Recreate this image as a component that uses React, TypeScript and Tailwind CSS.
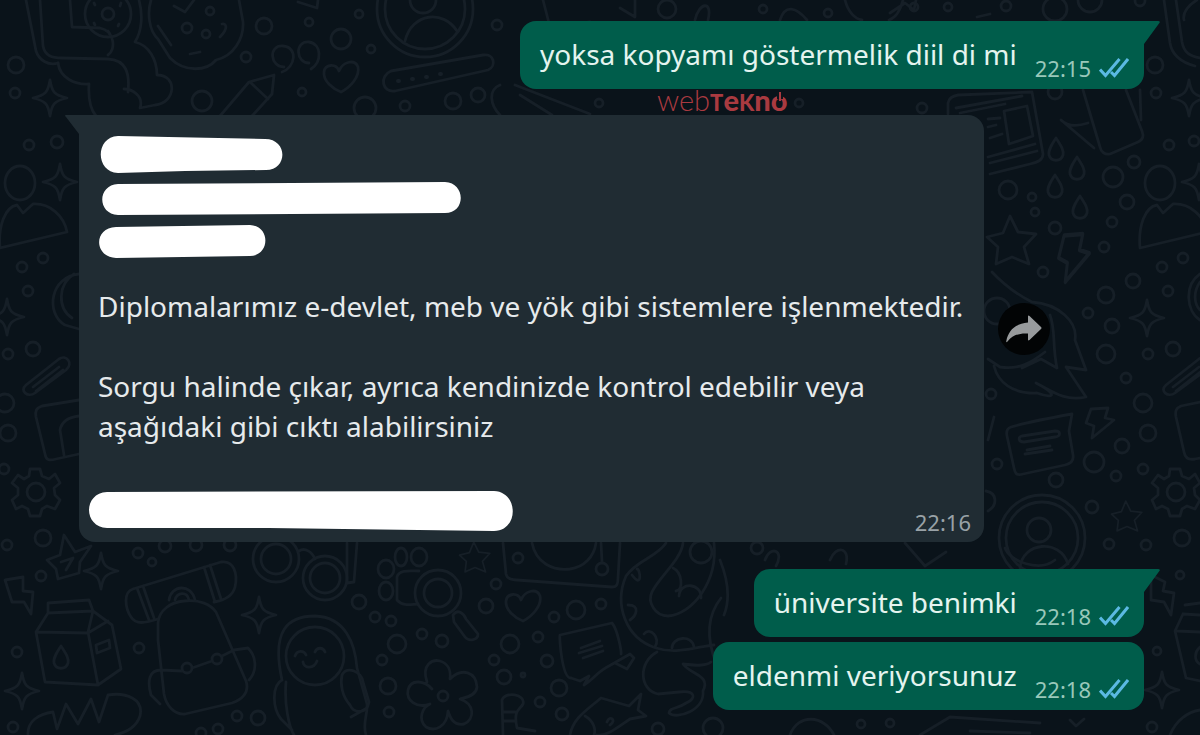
import React from "react";

interface ISentMessage {
  text: string;
  time: string;
}

const dots: number[][] = [
  [16, 65, 8], [15, 93, 5], [264, 26, 8], [309, 22, 4], [341, 39, 10], [359, 14, 4], [371, 49, 4],
  [246, 57, 5], [202, 101, 10], [302, 92, 4], [365, 108, 11], [405, 106, 5], [453, 101, 8], [478, 95, 7],
  [497, 25, 5], [29, 145, 5], [57, 142, 6], [22, 267, 5], [43, 258, 5], [948, 7, 4], [1006, 6, 5],
  [1055, 9, 12], [1090, 0, 12], [1140, 1, 5], [1155, 65, 8], [1156, 93, 5], [1055, 92, 7], [922, 108, 5],
  [1169, 145, 5], [1194, 141, 5], [1134, 162, 6], [1113, 177, 10], [1127, 202, 7], [1008, 190, 9],
  [1032, 197, 4], [1035, 212, 4], [1055, 228, 6], [1112, 222, 5], [1104, 247, 5], [1043, 272, 5],
  [1162, 267, 5], [1183, 258, 5], [1133, 281, 7], [1106, 295, 8], [1168, 291, 5], [1088, 313, 5],
  [1112, 326, 7], [1106, 354, 9], [1148, 354, 5], [1173, 349, 7], [1126, 378, 5], [1143, 403, 9],
  [991, 394, 5], [1148, 433, 8], [1122, 446, 7], [1094, 462, 10], [1116, 476, 5], [1143, 469, 5],
  [997, 464, 5], [1056, 480, 7], [1092, 507, 6], [1109, 544, 5], [1146, 545, 5], [1182, 538, 8],
  [28, 291, 5], [8, 354, 5], [33, 349, 7], [5, 403, 9], [8, 433, 8], [4, 469, 5], [43, 538, 8],
  [7, 545, 5], [41, 576, 5], [138, 553, 5], [152, 562, 4], [165, 546, 6], [196, 545, 6], [230, 545, 6],
  [17, 652, 5], [139, 648, 5], [13, 727, 5], [237, 716, 5], [258, 718, 7], [218, 729, 5], [201, 733, 5],
  [359, 602, 7], [375, 617, 5], [391, 621, 5], [397, 644, 9], [382, 660, 5], [388, 686, 8], [389, 712, 5],
  [422, 634, 5], [442, 641, 6], [486, 606, 7], [496, 584, 5], [518, 558, 5], [576, 610, 9], [554, 617, 5],
  [601, 604, 5], [510, 644, 9], [538, 637, 5], [494, 660, 5], [547, 661, 6], [504, 677, 7], [523, 675, 2],
  [559, 688, 8], [540, 702, 5], [562, 714, 6], [658, 729, 6], [1180, 575, 4], [1157, 651, 4],
  [861, 724, 4], [890, 723, 4], [1152, 727, 5], [713, 728, 10], [667, 9, 9], [763, 9, 4], [828, 13, 4],
  [914, 7, 4], [599, 103, 4], [799, 103, 4], [757, 548, 6],
];

const sparkles: number[][] = [
  [50, 98], [1189, 98], [7, 317], [1147, 318], [101, 571], [259, 615], [22, 691], [1162, 690], [60, 182], [1199, 182],
];

const Wallpaper: React.FC = () => {
  return (
    <svg
      className="pointer-events-none absolute inset-0 h-full w-full"
      viewBox="0 0 1200 735"
      preserveAspectRatio="xMidYMid slice"
      fill="none"
      stroke="#161f27"
      strokeWidth="2.8"
      strokeLinecap="round"
      strokeLinejoin="round"
      aria-hidden="true"
    >
      <defs>
        <path id="sparkle" d="M0-18C2-6 4-3 17 0C4 3 2 6 0 18C-2 6-4 3-17 0C-4-3-2-6 0-18Z" />
        <path id="heart" d="M0 15C-8 12-18 4-17-5C-16-13-5-14-2-6C2-16 14-18 17-10C19-1 10 10 0 15Z" />
        <path id="star" d="M-2-24L6-8L24-6L12 7L17 24L0 17L-16 24L-14 7L-25-3L-9-7Z" />
        <path id="bolt" d="M-9-14L8-15L5-5L14-3L-8 15L-6 3L-14 0Z" />
        <path id="drop" d="M0-12C5-4 8 0 7 5C5 12-5 12-7 5C-8 0-4-6 0-12Z" />
        <g id="person">
          <ellipse cx="0" cy="-8" rx="15" ry="17" />
          <path d="M-20 57C-22 35-15 16-3 14L3 22L13 13C30 12 44 25 47 41Z" />
        </g>
        <g id="gear">
          <circle r="9" />
          <path d="M-6-23L4-23L6-16L13-13L19-18L24-9L18-4L19 3L24 8L19 17L11 14L6 17L4 24L-6 24L-8 17L-14 14L-20 17L-24 8L-18 3L-18-4L-24-9L-18-17L-12-13L-7-16Z" />
        </g>
        <path id="clip" d="M-20 11L13-15C20-20 28-11 20-4L-11 19C-18 24-27 17-20 11ZM-13 13L13-7M-10 17L17-4" />
      </defs>

      {dots.map(([x, y, r], index) => (
        <circle key={index} cx={x} cy={y} r={r} />
      ))}
      {sparkles.map(([x, y], index) => (
        <use key={index} href="#sparkle" x={x} y={y} />
      ))}
      <use href="#heart" x="341" y="77" />
      <use href="#heart" x="523" y="606" />
      <use href="#star" x="1012" y="240" />
      <use href="#star" transform="translate(1127 516) scale(.62)" />
      <use href="#star" transform="translate(475 557) scale(.62)" />
      <use href="#bolt" x="1100" y="423" />
      <use href="#bolt" transform="translate(1074 258) scale(1.1 1.6)" />
      <use href="#person" x="20" y="191" />
      <use href="#person" x="1160" y="191" />
      <use href="#gear" x="36" y="492" />
      <use href="#gear" x="1176" y="492" />
      <use href="#clip" x="46" y="374" />
      <use href="#clip" x="1186" y="374" />
      <use href="#drop" x="1056" y="150" />
      <use href="#drop" x="1077" y="169" />
      <use href="#drop" x="1055" y="187" />
      <use href="#drop" x="1080" y="208" />

      {/* profile badges */}
      <circle cx="425" cy="9" r="48" />
      <circle cx="425" cy="9" r="40" />
      <circle cx="423" cy="0" r="13" />
      <path d="M405 41C412 12 444 10 457 31" />
      <circle cx="1042" cy="538" r="43" />
      <circle cx="1042" cy="538" r="36" />
      <circle cx="1039" cy="530" r="12" />
      <path d="M1020 568C1022 542 1060 538 1068 564" />

      {/* phone in a hand and cookie */}
      <path d="M26 0L36 51C39 60 48 66 58 63M40 0L43 46C45 56 52 58 62 58L108 59C126 60 130 73 128 92" />
      <path d="M70 0L72 27L100 28C115 31 116 50 108 55M58 63C60 78 75 85 89 84C88 100 91 110 96 116" />
      <path d="M139 0C143 15 142 31 135 42C149 45 157 60 157 75C178 75 176 103 155 105L140 108C144 96 132 89 124 89" />
      <circle cx="108" cy="14" r="23" />
      <circle cx="108" cy="14" r="6" />
      <path d="M94 3L95 5M121 3L120 6M94 23L95 25M118 26L119 24M108 31L110 34" />
      <path d="M151 0C147 13 149 31 158 39L170 58C185 73 207 71 216 60C234 56 244 38 243 22L239 0M158 26L171 45M174 6L185 12L194 0M220 37C229 28 226 23 222 24M190 54L200 52" />
      <circle cx="187" cy="28" r="5" />
      <circle cx="210" cy="11" r="4" />
      <circle cx="206" cy="34" r="4" />

      {/* quotes, pencil and password field */}
      <path d="M284 67C270 67 268 45 283 46C298 47 296 67 282 72M309 63C296 63 294 41 309 42C322 44 322 62 311 69" />
      <path d="M220 116L249 82L274 75L272 94L252 116M251 83L268 99" />
      <path d="M391 71L483 55C494 53 497 66 488 70L395 91C382 93 379 76 391 71Z" />
      <path d="M398 81h1M412 79h1M426 77h1M440 74h1" strokeWidth="4" />
      <path d="M298 2L317 8L318 0M543 0L550 27L590 22M635 0L635 17L620 8M695 20C699 2 713 0 708 20M780 20C785 4 796 7 807 20" />
      <path d="M500 85C488 90 490 105 500 115M515 85L590 114M520 95L552 115M845 0C848 12 855 19 862 20M903 0C900 12 895 18 889 20M890 13L905 3L914 10L916 0M977 17L990 14" />

      {/* newspaper and tablet */}
      <path d="M948 114L948 103C949 98 952 96 958 95L1032 92L1043 154C1043 160 1038 162 1030 164L990 174M956 108L1022 96M960 113L1005 104M1004 111L1027 106L1033 136L1009 144ZM988 119L1000 118M988 127L996 125M990 138L1002 134M988 157L1035 144M990 163L1037 151" />
      <path d="M1083 90L1100 147C1101 152 1105 155 1110 154L1138 142C1143 140 1144 136 1142 131L1126 90M1061 120L1094 148M1061 120C1068 127 1079 126 1088 123M1140 90L1141 120" />
      <path d="M1164 0L1170 43C1172 55 1180 62 1195 66M1176 0L1182 42C1184 53 1190 56 1200 58M1197 0C1190 4 1182 12 1184 20" />

      {/* rocket and comic bubble beside the long message */}
      <path d="M992 272C1006 287 1018 295 1032 302C1059 304 1078 322 1075 340L1086 370L1066 367L1086 397C1064 402 1050 390 1036 383C1055 393 1058 400 1037 393C1012 394 998 382 994 366M1050 315C1056 331 1052 345 1057 368L1041 359L1022 368M988 359L1000 367C1018 370 1031 363 1045 352" />
      <circle cx="997" cy="311" r="13" />
      <path d="M1011 427C1028 422 1055 417 1072 414L1069 431L1073 455C1074 461 1070 464 1065 465L1023 474C1016 476 1015 473 1014 468L1007 436C1006 431 1008 428 1011 427ZM1022 436L1055 431C1061 431 1061 436 1055 437L1024 442C1018 442 1018 437 1022 436ZM1027 450L1050 446M1025 454L1052 450" />
      <path d="M988 440L994 417M988 511C998 505 997 493 986 491" />

      {/* picture frame on both edges */}
      <path d="M79 400L42 406C36 408 35 411 36 417L45 454C46 460 49 461 56 459L79 454M60 430L64 455M60 430C62 420 70 417 79 416" />
      <path d="M1200 402L1181 406C1176 408 1175 411 1176 417L1184 452C1185 458 1189 460 1195 459L1200 458" />
      <path d="M79 274C50 277 45 313 65 325L79 329M74 274C58 284 57 308 72 318" />
      <path d="M1200 274C1184 285 1186 311 1200 320M1200 282C1193 292 1194 304 1200 310" />

      {/* bolt, milk carton and scribble */}
      <path d="M5 580L23 577L23 591L33 592L31 614L24 602L12 602Z" />
      <path d="M1151 575L1165 582L1163 591L1174 593L1171 615L1164 602L1151 600Z" />
      <path d="M48 603L89 600L93 611L48 613ZM48 613L36 632L45 682L98 685L121 669L112 625L93 611L88 632L98 685M36 632L88 633L108 621M96 645L109 640L110 648L97 653Z" />
      <use href="#drop" x="61" y="658" />
      <path d="M1185 605L1200 603M1183 614L1200 615M1183 614L1175 631L1186 678L1200 681M1177 631L1200 632M1200 647C1194 652 1194 661 1200 664" />
      <path d="M28 735C27 721 39 714 53 712L57 729L66 704L78 724L91 699L99 722L108 695C126 692 144 699 140 716C136 728 124 733 115 735" />
      <path d="M47 560L60 555L64 535L75 552L91 546L80 562L79 573L58 579L56 569ZM61 562L73 558L66 570" />

      {/* backpack */}
      <path d="M133 589L221 562C234 560 238 574 235 587C233 595 226 600 214 602M133 589C123 592 125 608 131 617C136 625 145 623 158 619M137 588L149 620M143 586L154 618M204 567L215 602M210 565L221 599" />
      <path d="M158 623C159 610 171 602 184 601C200 599 211 605 216 612L246 681C250 693 241 700 232 703L185 714C174 715 166 705 164 694L158 640ZM161 670L182 671M192 668L212 661M222 656L234 650L248 648C256 656 258 670 249 680M161 670C149 670 147 681 151 695L160 704" />
      <path d="M169 600C171 585 191 583 195 600M175 600C177 592 187 591 189 600" />
      <circle cx="187" cy="668" r="5" />
      <circle cx="217" cy="659" r="5" />

      {/* glasses and penguin */}
      <circle cx="276" cy="559" r="23" />
      <circle cx="276" cy="559" r="15" />
      <circle cx="325" cy="578" r="22" />
      <circle cx="325" cy="578" r="15" />
      <path d="M299 551C305 547 312 552 315 559M347 543L347 583L354 582L357 543" />
      <circle cx="315" cy="656" r="29" />
      <path d="M282 680C271 630 288 616 315 616C345 617 355 643 357 668L367 704C368 714 362 724 366 735M282 680C272 685 272 708 281 719L292 730M286 682C284 704 289 727 294 735M295 656C297 650 304 650 306 655M315 652C317 647 323 647 325 652M303 662C304 669 314 669 317 661" />
      <path d="M342 675C347 665 362 672 363 682L369 702C367 714 354 714 350 705C342 696 340 684 342 675ZM351 717L367 708" />

      {/* paw, magnifier and flower */}
      <ellipse cx="386" cy="569" rx="8" ry="9" />
      <ellipse cx="401" cy="557" rx="6" ry="9" />
      <ellipse cx="419" cy="557" rx="8" ry="9" />
      <ellipse cx="386" cy="591" rx="7" ry="9" />
      <path d="M397 577C399 569 411 571 419 571M397 577L397 600C403 607 412 604 418 604" />
      <circle cx="438" cy="593" r="23" />
      <circle cx="438" cy="593" r="14" />
      <path d="M453 615C458 608 464 614 466 619L478 634C478 640 469 642 465 637L454 622Z" />
      <circle cx="443" cy="696" r="5" />
      <path d="M427 682C421 664 433 659 440 661C449 664 451 670 450 679C462 667 476 672 477 687C476 697 463 698 460 699C475 704 475 719 464 724C453 726 450 717 448 711C447 727 435 732 426 727C417 719 423 707 430 704C416 709 406 700 408 690C411 678 425 681 432 689" />

      {/* record player, letter, snake and fish */}
      <path d="M503 543L506 574C507 579 511 580 517 580L612 587C617 587 618 584 618 578L620 543M601 543L602 562" />
      <path d="M532 543C536 563 553 571 570 569C584 567 594 557 596 543" />
      <circle cx="602" cy="569" r="6" />
      <path d="M571 678C562 679 559 637 560 635L612 623C618 630 622 654 621 654M571 678L580 681L589 676L584 685C594 679 598 671 609 666L630 654L634 658L627 669L615 663M581 648L600 641M579 653L602 646M583 658L603 651" />
      <path d="M666 543C657 557 637 560 626 576C614 604 625 638 656 648C677 655 700 646 714 645M683 543C681 560 659 577 652 592C647 602 655 616 668 616C693 614 718 581 714 543M721 598C706 617 707 640 716 663M657 652C638 662 639 690 658 694L679 692C697 690 695 699 688 702C676 710 670 707 669 713C677 720 705 710 703 691C711 675 691 675 683 664C692 665 705 667 711 662" />
      <path d="M632 575C643 590 640 568 637 569M628 605C641 605 636 616 630 620M644 634C650 626 661 638 655 647M672 648C672 637 692 634 694 647M673 568C682 572 684 590 676 591M679 596C680 581 702 583 701 598" />
      <circle cx="701" cy="552" r="11" />
      <path d="M503 735L502 700C505 691 526 694 523 704C520 710 513 709 517 728L535 731M504 712L515 712M504 721L515 721" />
      <path d="M570 735C573 718 587 710 601 698L629 706L641 694L638 710L646 716L630 719C618 727 606 737 597 735M585 716C594 721 596 730 594 735M607 722C610 714 617 721 610 725" />
      <path d="M790 735C798 713 824 715 834 735M920 735L950 717L1040 723M970 731L1030 733M1170 735C1176 720 1188 712 1200 710M1070 720L1076 726L1084 719M720 560C728 580 730 600 724 615" />
      <path d="M765 560C770 545 785 550 776 566M830 560C836 545 850 547 846 564M905 543L925 566L946 552M1005 548C1010 562 1040 572 1055 560" />
    </svg>
  );
};

const Ticks: React.FC = () => {
  return (
    <svg
      className="h-5 w-[30px] shrink-0"
      viewBox="0 0 30 20"
      fill="none"
      stroke="#5bb9e3"
      strokeWidth="3"
      role="img"
      aria-label="Okundu"
    >
      <path d="M1 11.5L6.5 17.500L20.5 1" />
      <path d="M12 14L15.5 17.500L29 1" />
    </svg>
  );
};

const SentMessage: React.FC<{ message: ISentMessage; tail?: boolean }> = ({ message, tail }) => {
  return (
    <div
      className={
        tail
          ? "relative flex items-end self-end rounded-2xl rounded-tr-none bg-[#005d4b] pl-5 pr-[15px]"
          : "relative flex items-end self-end rounded-2xl bg-[#005d4b] pl-5 pr-[15px]"
      }
    >
      {tail && (
        <svg className="absolute -right-4 top-0 h-6 w-[17px]" viewBox="0 0 17 24" fill="#005d4b" aria-hidden="true">
          <path d="M0 0H15Q18 0 16 2.500L1 23L0 24Z" />
        </svg>
      )}
      <p className="pb-[15px] pt-[13px] text-[28px] leading-[40px] text-[#e4f4ef]">{message.text}</p>
      <div className="flex items-center gap-2 pb-[9px] pl-[18px]">
        <time className="text-[22px] leading-6 text-[#99c8ba]">{message.time}</time>
        <Ticks />
      </div>
    </div>
  );
};

const Watermark: React.FC = () => {
  return (
    <div className="ml-[578px] flex h-[26px] items-baseline font-['Lato',sans-serif] text-[29px] leading-[22px] text-[#a93a40]">
      <span>
        <span className="font-light">web</span>
        <span className="text-[22px] font-black">T</span>
        <span className="font-black">e</span>
        <span className="text-[22px] font-black">K</span>
        <span className="font-black">n</span>
      </span>
      <span className="relative font-black">
        o
        <svg className="absolute left-[6px] top-[3px] h-3 w-1.5" viewBox="0 0 6 12" aria-hidden="true">
          <path d="M0 0H6V7H0Z" fill="#0b141b" />
          <path d="M2 0H4V9H2Z" fill="#a93a40" />
        </svg>
      </span>
    </div>
  );
};

const ReceivedMessage: React.FC = () => {
  return (
    <div className="relative w-full max-w-[905px] rounded-2xl rounded-tl-none bg-[#202c33] pb-2 pt-[21px] text-[#e6eaec]">
      <svg className="absolute -left-[14px] top-0 h-5 w-[15px]" viewBox="0 0 15 20" fill="#202c33" aria-hidden="true">
        <path d="M15 0H1Q-1 0 1 2L14 19L15 20Z" />
      </svg>
      <div className="flex flex-col pl-5">
        <svg className="ml-px h-[37px] w-[183px]" viewBox="0 0 183 37" fill="#fff" aria-hidden="true">
          <path d="M18 0L165 3C188 3 188 34 166 34L85 35L18 37C-5 36-5 1 18 0Z" />
        </svg>
        <svg className="ml-[3px] mt-[9px] h-[33px] w-[359px]" viewBox="0 0 359 33" fill="#fff" aria-hidden="true">
          <path d="M16 2L343 0C364 1 364 31 343 31L16 33C-5 32-5 3 16 2Z" />
        </svg>
        <svg className="mt-[10px] h-[33px] w-[167px]" viewBox="0 0 167 33" fill="#fff" aria-hidden="true">
          <path d="M17 2L151 0C172 1 171 31 151 31L17 33C-5 32-6 3 17 2Z" />
        </svg>
      </div>
      <div className="mt-7 flex flex-col gap-10 pl-[19px] pr-4 text-[28px] leading-[40px]">
        <p>Diplomalarımız e-devlet, meb ve yök gibi sistemlere işlenmektedir.</p>
        <p>Sorgu halinde çıkar, ayrıca kendinizde kontrol edebilir veya aşağıdaki gibi cıktı alabilirsiniz</p>
      </div>
      <div className="mt-[45px] flex items-end justify-between pl-[10px] pr-[13px]">
        <svg className="mb-[3px] h-10 w-[424px]" viewBox="0 0 424 40" fill="#fff" aria-hidden="true">
          <path d="M18 1L405 0C430 1 430 40 405 40L180 37L18 37C-6 36-6 2 18 1Z" />
        </svg>
        <time className="text-[22px] leading-6 text-[#99a2a7]">22:16</time>
      </div>
    </div>
  );
};

const App: React.FC = () => {
  return (
    <main className="relative min-h-screen overflow-hidden bg-[#0a131a] font-['Noto_Sans',sans-serif]">
      <Wallpaper />
      <div className="relative flex flex-col pb-6 pl-[79px] pr-14 pt-[21px]">
        <SentMessage message={{ text: "yoksa kopyamı göstermelik diil di mi", time: "22:15" }} tail />
        <Watermark />
        <div className="flex items-center gap-[14px]">
          <ReceivedMessage />
          <button
            type="button"
            aria-label="İlet"
            className="flex size-[52px] shrink-0 items-center justify-center rounded-full bg-[#020405]"
          >
            <svg className="h-7 w-9" viewBox="0 0 36 28" fill="#989b9d" aria-hidden="true">
              <path d="M22 1.500Q22 0 23.500 1L35 12Q36 13 35 14L23.500 25Q22 26 22 24.500V18.500C13 18 7 20 1.500 26.500Q0 28 .3 26C2.500 15 10 8.500 22 7.500Z" />
            </svg>
          </button>
        </div>
        <div className="mt-[27px] flex flex-col gap-[5px]">
          <SentMessage message={{ text: "üniversite benimki", time: "22:18" }} tail />
          <SentMessage message={{ text: "eldenmi veriyorsunuz", time: "22:18" }} />
        </div>
      </div>
    </main>
  );
};

export default App;
